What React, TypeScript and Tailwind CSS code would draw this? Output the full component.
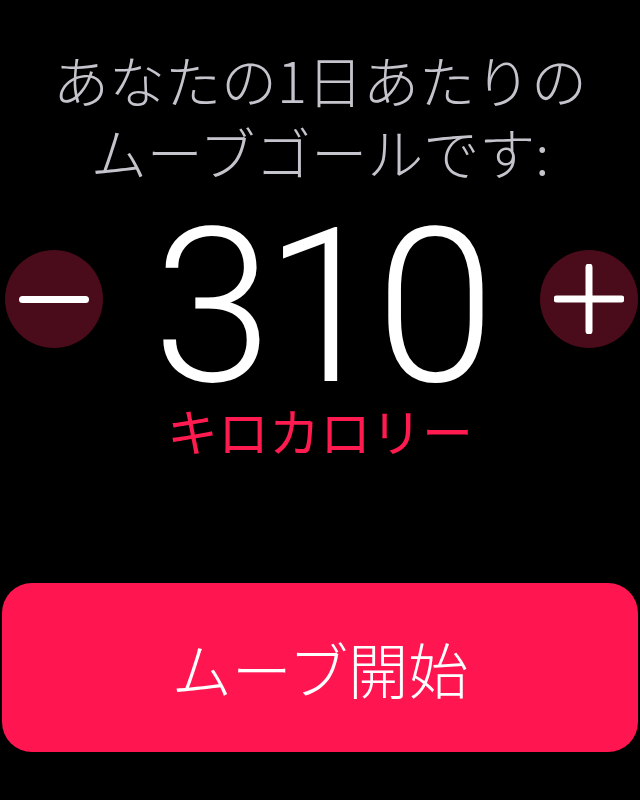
const JP = { fontFamily: '"Noto Sans CJK JP", "Noto Sans", sans-serif' };

export default function App() {
  return (
    <div className="flex h-[800px] w-[640px] flex-col overflow-hidden bg-black">
      <h1
        style={JP}
        className="pt-[43px] text-center text-[56px] font-light leading-[72px] text-[#c4c4cc]"
      >
        あなたの1日あたりの
        <br />
        ムーブゴールです:
      </h1>

      <div className="relative mt-[36px] flex h-[166px] items-start justify-center">
        <button className="absolute left-[5px] top-[27px] flex h-[98px] w-[98px] items-center justify-center rounded-full bg-[#4a0b1a]">
          <span className="block h-[7px] w-[70px] rounded-full bg-white" />
        </button>
        <span
          style={{ fontFamily: 'Roboto, "Noto Sans", sans-serif' }}
          className="text-[215px] font-light leading-[170px] tracking-[-8px] text-white"
        >
          310
        </span>
        <button className="absolute right-[2px] top-[27px] flex h-[98px] w-[98px] items-center justify-center rounded-full bg-[#4a0b1a]">
          <svg width="70" height="70" viewBox="0 0 70 70">
            <path d="M35 3v64M3 35h64" stroke="white" strokeWidth="7" strokeLinecap="round" />
          </svg>
        </button>
      </div>

      <p
        style={JP}
        className="mt-[11px] text-center text-[51px] leading-[60px] text-[#ff1a50]"
      >
        キロカロリー
      </p>

      <div className="flex-1" />

      <button
        style={JP}
        className="mx-[2px] mb-[48px] flex h-[169px] items-center justify-center rounded-[30px] bg-[#ff1550] text-[60px] font-light text-white"
      >
        ムーブ開始
      </button>
    </div>
  );
}
